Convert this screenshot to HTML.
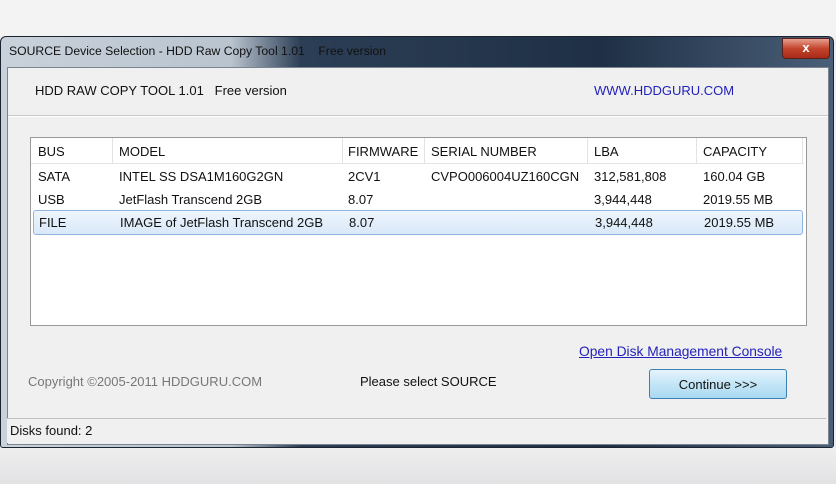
<!DOCTYPE html><html><head><style>
body{margin:0;width:836px;height:484px;background:#eeeeef;position:relative;overflow:hidden;font-family:"Liberation Sans",sans-serif;font-size:13px;color:#111}
.a{position:absolute}
.win{left:0;top:36px;width:834px;height:412px;background:linear-gradient(90deg,#c9d1da 0,#b9c4cf 230px,#2c3e55 300px,#1f3046 600px,#4a5f78 834px);border:1px solid #1a2430;border-radius:6px 6px 3px 3px;box-sizing:border-box}
.client{left:6px;top:30px;width:820px;height:376px;background:#f0f0f0;border:1px solid #7a8590}
.hdr{left:30px;top:137px;width:775px;height:187px;background:#fff;border:1px solid #999}
.row{position:absolute;left:0;width:773px;height:23px}
.row span{position:absolute;top:4px}
</style></head><body>
<div class="a" style="left:0;top:0;width:836px;height:36px;background:#f3f3f4"></div>
<div class="a win">
 <div class="a" style="left:8px;top:7px;font-size:12.2px;color:#111">SOURCE Device Selection - HDD Raw Copy Tool 1.01 &nbsp;&nbsp; Free version</div>
 <div class="a" style="left:781px;top:1px;width:46px;height:19px;background:linear-gradient(#e8a090,#c4442c 50%,#a82a18);border:1px solid #5a1f18;border-radius:0 0 4px 4px;color:#fff;font-weight:bold;text-align:center;font-size:13px;line-height:18px">x</div>
 <div class="a client">
  <div class="a" style="left:27px;top:15px;font-size:13px">HDD RAW COPY TOOL 1.01 &nbsp;&nbsp;Free version</div>
  <div class="a" style="left:586px;top:15px;color:#2222bb;font-size:13px">WWW.HDDGURU.COM</div>
  <div class="a" style="left:0;top:47px;width:820px;height:1px;background:#c8c8c8"></div>
  <div class="a" style="left:0;top:48px;width:820px;height:1px;background:#fff"></div>
 </div>
</div>
<div class="a hdr">
 <div class="row" style="top:0;height:25px;border-bottom:1px solid #e5e5e5">
  <span style="left:7px;top:6px">BUS</span><span style="left:88px;top:6px">MODEL</span><span style="left:317px;top:6px">FIRMWARE</span><span style="left:400px;top:6px">SERIAL NUMBER</span><span style="left:563px;top:6px">LBA</span><span style="left:672px;top:6px">CAPACITY</span>
  <div class="a" style="left:81px;top:0;width:1px;height:25px;background:#e3e3e3"></div>
  <div class="a" style="left:311px;top:0;width:1px;height:25px;background:#e3e3e3"></div>
  <div class="a" style="left:393px;top:0;width:1px;height:25px;background:#e3e3e3"></div>
  <div class="a" style="left:556px;top:0;width:1px;height:25px;background:#e3e3e3"></div>
  <div class="a" style="left:665px;top:0;width:1px;height:25px;background:#e3e3e3"></div>
  <div class="a" style="left:771px;top:0;width:1px;height:25px;background:#e3e3e3"></div>
 </div>
 <div class="row" style="top:27px"><span style="left:7px">SATA</span><span style="left:88px">INTEL SS DSA1M160G2GN</span><span style="left:317px">2CV1</span><span style="left:400px">CVPO006004UZ160CGN</span><span style="left:563px">312,581,808</span><span style="left:672px">160.04 GB</span></div>
 <div class="row" style="top:50px"><span style="left:7px">USB</span><span style="left:88px">JetFlash Transcend 2GB</span><span style="left:317px">8.07</span><span style="left:563px">3,944,448</span><span style="left:672px">2019.55 MB</span></div>
 <div class="row" style="top:72px;left:2px;width:768px;background:linear-gradient(#eef5fd,#d9e8f9);border:1px solid #8fb4e0;border-radius:3px"><span style="left:5px">FILE</span><span style="left:86px">IMAGE of JetFlash Transcend 2GB</span><span style="left:315px">8.07</span><span style="left:561px">3,944,448</span><span style="left:670px">2019.55 MB</span></div>
</div>
<div class="a" style="left:579px;top:344px;color:#2222bb;text-decoration:underline;font-size:13.8px">Open Disk Management Console</div>
<div class="a" style="left:28px;top:374px;color:#777;font-size:13px">Copyright ©2005-2011 HDDGURU.COM</div>
<div class="a" style="left:360px;top:374px;font-size:13px">Please select SOURCE</div>
<div class="a" style="left:649px;top:369px;width:138px;height:30px;border:1px solid #3c7fb1;border-radius:3px;background:linear-gradient(#e5f4fc,#c4e5f6 50%,#a9d9f2);box-sizing:border-box;text-align:center;line-height:29px;font-size:13px">Continue &gt;&gt;&gt;</div>
<div class="a" style="left:7px;top:418px;width:819px;height:1px;background:#c0c0c0"></div>
<div class="a" style="left:7px;top:419px;width:819px;height:24px;background:#f0f0f0"></div>
<div class="a" style="left:10px;top:423px;font-size:13px">Disks found: 2</div>
<div class="a" style="left:0;top:448px;width:836px;height:36px;background:linear-gradient(#eeeeef,#e2e2e4)"></div>
</body></html>
